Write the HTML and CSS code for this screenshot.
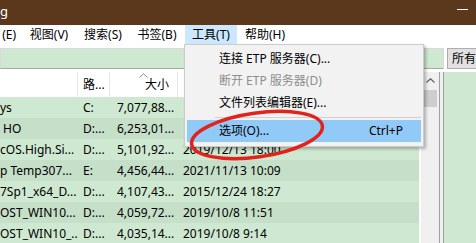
FILE: index.html
```html
<!DOCTYPE html>
<html lang="zh-CN">
<head>
<meta charset="utf-8">
<title>Everything</title>
<link rel="stylesheet" href="styles.css">
</head>
<body>
<div class="win">
  <div class="titlebar">
    <span class="title">g</span>
    <span class="min"></span>
  </div>
  <div class="menubar">
    <span class="mi mi-first">(E)</span>
    <span class="mi">视图(V)</span>
    <span class="mi">搜索(S)</span>
    <span class="mi">书签(B)</span>
    <span class="mi open">工具(T)</span>
    <span class="mi">帮助(H)</span>
  </div>
  <div class="toolbar">
    <div class="search"></div>
    <div class="allbtn">所有</div>
  </div>
  <div class="main">
    <div class="list">
      <div class="lhead">
        <div class="hc hc-name"></div>
        <div class="hc hc-path">路...</div>
        <div class="hc hc-size"><svg class="sort" width="9" height="5" viewBox="0 0 9 5"><polyline points="0.5,4.5 4.5,0.8 8.5,4.5" fill="none" stroke="#8a8a8a" stroke-width="1"/></svg>大小</div>
        <div class="hc hc-date"></div>
      </div>
      <div class="row odd"><span class="c-name">ys</span><span class="c-path">C:</span><span class="c-size">7,077,88...</span><span class="c-date"></span></div>
      <div class="row even"><span class="c-name ind">HO</span><span class="c-path">D:...</span><span class="c-size">6,253,01...</span><span class="c-date"></span></div>
      <div class="row odd"><span class="c-name">cOS.High.Si...</span><span class="c-path">D:...</span><span class="c-size">5,101,92...</span><span class="c-date">2019/12/13 18:00</span></div>
      <div class="row even"><span class="c-name">p Temp307...</span><span class="c-path">E:</span><span class="c-size">4,456,44...</span><span class="c-date">2021/11/13 10:09</span></div>
      <div class="row odd"><span class="c-name">7Sp1_x64_D...</span><span class="c-path">D:...</span><span class="c-size">4,107,43...</span><span class="c-date">2015/12/24 18:27</span></div>
      <div class="row even"><span class="c-name">OST_WIN10...</span><span class="c-path">D:...</span><span class="c-size">4,059,72...</span><span class="c-date">2019/10/8 11:51</span></div>
      <div class="row odd"><span class="c-name">OST_WIN10_...</span><span class="c-path">D:...</span><span class="c-size">4,035,14...</span><span class="c-date">2019/10/8 9:14</span></div>
    </div>
    <div class="vscroll">
      <div class="sb-up"><svg width="9" height="5" viewBox="0 0 9 5"><polyline points="0.5,4.5 4.5,0.8 8.5,4.5" fill="none" stroke="#606060" stroke-width="1.2"/></svg></div>
      <div class="sb-thumb"></div>
    </div>
    <div class="splitter"></div>
    <div class="rpane"></div>
  </div>

  <div class="dropdown">
    <div class="dd-item">连接 ETP 服务器(C)...</div>
    <div class="dd-item disabled">断开 ETP 服务器(D)</div>
    <div class="dd-item">文件列表编辑器(E)...</div>
    <div class="dd-sep"></div>
    <div class="dd-item hot"><span>选项(O)...</span><span class="acc">Ctrl+P</span></div>
  </div>

  <svg class="annot" width="476" height="243" viewBox="0 0 476 243">
    <ellipse cx="257" cy="135" rx="66" ry="22" transform="rotate(-8 257 135)" fill="none" stroke="#e2231d" stroke-width="3.5"/>
  </svg>
</div>
</body>
</html>
```

FILE: styles.css
```css
* { box-sizing: border-box; margin: 0; padding: 0; }
html, body { width: 476px; height: 243px; overflow: hidden; }
body {
  font-family: "Noto Sans", "Noto Sans CJK SC", sans-serif;
  font-size: 12px;
  color: #000;
  background: #fff;
}
.win {
  position: relative;
  width: 476px;
  height: 243px;
  display: flex;
  flex-direction: column;
  overflow: hidden;
}
.titlebar {
  flex: none;
  height: 25px;
  background: #5b371b;
  color: #fff;
  display: flex;
  align-items: center;
  justify-content: space-between;
}
.title { font-size: 13px; line-height: 1; padding-bottom: 3px; }
.min { width: 11px; height: 1px; background: #fff; margin-right: 8px; margin-bottom: 6px; }

.menubar {
  flex: none;
  height: 20px;
  display: flex;
  gap: 2px;
  background: #fff;
}
.mi {
  flex: none;
  width: 52px;
  display: flex;
  align-items: center;
  justify-content: center;
  line-height: 1;
  white-space: nowrap;
}
.mi-first { width: 21px; justify-content: flex-end; padding-right: 5px; }
.mi.open { background: #cce8ff; }

.toolbar {
  flex: none;
  height: 21px;
  margin-top: 3px;
  display: flex;
  gap: 3px;
  overflow: hidden;
}
.search {
  flex: none;
  width: 444px;
  background: #cfe8d1;
  border: 1px solid #d9d9d9;
  border-bottom-color: #a8a8a8;
}
.allbtn {
  flex: none;
  width: 40px;
  background: #e1e1e1;
  border: 1px solid #adadad;
  padding-left: 4px;
  display: flex;
  align-items: center;
  line-height: 1;
  white-space: nowrap;
}

.main {
  flex: 1;
  margin-top: 3px;
  display: flex;
  min-height: 0;
}
.list {
  flex: none;
  width: 419px;
  background: #fff;
}
.lhead {
  height: 25px;
  display: grid;
  grid-template-columns: 78px 32px 68px 1fr;
  background: #fff;
}
.hc {
  position: relative;
  display: flex;
  align-items: center;
  border-right: 1px solid #e5e5e5;
  white-space: nowrap;
  line-height: 1;
  padding-top: 1px;
}
.hc-path { padding-left: 5px; }
.hc-size { justify-content: flex-end; padding-right: 8px; }
.hc-date { border-right: none; }
.sort { position: absolute; left: 29px; top: 1px; }

.row {
  height: 21px;
  display: grid;
  grid-template-columns: 78px 32px 68px 1fr;
  align-items: center;
  white-space: nowrap;
  line-height: 21px;
}
.row.odd { background: #cfe8d1; }
.row.even { background: #c5dfc8; }
.row span { overflow: hidden; }
.c-name.ind { padding-left: 3px; }
.c-path { padding-left: 5px; }
.c-size { padding-left: 7px; }
.c-date { padding-left: 5px; }

.vscroll {
  flex: none;
  width: 20px;
  background: #f0f0f0;
  border-left: 2px solid #fff;
  display: flex;
  flex-direction: column;
  align-items: center;
}
.sb-up {
  height: 17px;
  display: flex;
  align-items: center;
  justify-content: center;
  width: 100%;
}
.sb-thumb {
  width: 14px;
  height: 17px;
  margin-top: 1px;
  background: #cdcdcd;
}
.splitter {
  flex: none;
  width: 5px;
  background: #f0f0f0;
  border-left: 1px solid #a0a0a0;
  border-right: 1px solid #a0a0a0;
}
.rpane { flex: 1; background: #cee8d1; }

.dropdown {
  position: absolute;
  left: 184px;
  top: 44px;
  width: 240px;
  height: 103px;
  background: #f2f2f2;
  border: 1px solid #cccccc;
  padding: 3px 2px;
  box-shadow: 2px 2px 3px rgba(0, 0, 0, 0.28);
}
.dd-item {
  height: 22px;
  display: flex;
  align-items: center;
  justify-content: space-between;
  padding-left: 32px;
  padding-right: 18px;
  white-space: nowrap;
  line-height: 1;
}
.dd-item.disabled { color: #8d8d8d; }
.dd-item.hot { background: #91c9f7; }
.dd-sep {
  height: 6px;
  margin-left: 28px;
  border-top: 3px solid transparent;
  position: relative;
}
.dd-sep::before {
  content: "";
  position: absolute;
  left: 0;
  right: 0;
  top: 0;
  height: 1px;
  background: #d0d0d0;
}

.annot {
  position: absolute;
  left: 0;
  top: 0;
  pointer-events: none;
}
```
